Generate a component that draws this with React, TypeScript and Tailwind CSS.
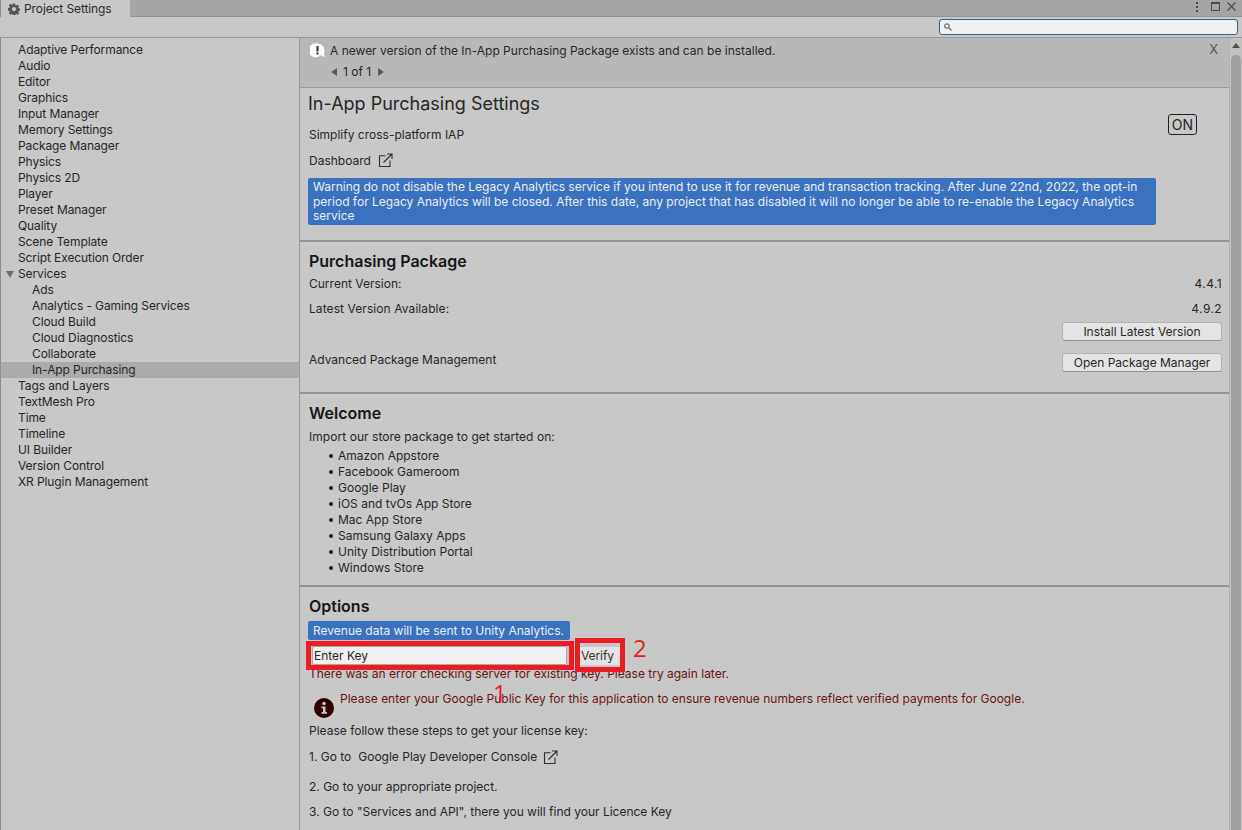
import React from "react";

const general1 = ["Adaptive Performance","Audio","Editor","Graphics","Input Manager","Memory Settings","Package Manager","Physics","Physics 2D","Player","Preset Manager","Quality","Scene Template","Script Execution Order"];
const services = ["Ads","Analytics - Gaming Services","Cloud Build","Cloud Diagnostics","Collaborate"];
const general2 = ["Tags and Layers","TextMesh Pro","Time","Timeline","UI Builder","Version Control","XR Plugin Management"];
const stores = ["Amazon Appstore","Facebook Gameroom","Google Play","iOS and tvOs App Store","Mac App Store","Samsung Galaxy Apps","Unity Distribution Portal","Windows Store"];

function Ext() {
  return (
    <svg width="15" height="15" viewBox="0 0 15 15" fill="none" stroke="#2e2e2e" strokeWidth="1.1" className="shrink-0">
      <path d="M7.5 2.8H1.5V13.5H12V7.5" />
      <path d="M5.5 9.5L13.5 1.5M9 1H14V6" />
    </svg>
  );
}

function Row({ children, indent = 17 }: { children: React.ReactNode; indent?: number }) {
  return <div className="h-4 leading-4 truncate tracking-[-0.1px]" style={{ paddingLeft: indent }}>{children}</div>;
}

export default function App() {
  return (
    <div className="relative w-[1242px] h-[830px] overflow-hidden bg-[#c8c8c8] text-[#262626] text-[12px] flex flex-col font-['Inter','Liberation_Sans',sans-serif]">
      {/* title bar */}
      <div className="h-[17px] shrink-0 bg-[#a5a5a5] flex items-start border-b border-[#949494]">
        <div className="w-[130px] h-[17px] bg-[#c8c8c8] border-l border-[#8e8e8e] flex items-center pl-[7px] gap-[4px] text-[#2b2b2b]">
          <svg width="12" height="12" viewBox="0 0 16 16" fill="#565656">
            <path d="M6.6 0.5h2.8l.4 2.1 1.3.6 1.8-1.2 2 2-1.2 1.8.6 1.3 2.1.4v2.8l-2.1.4-.6 1.3 1.2 1.8-2 2-1.8-1.2-1.3.6-.4 2.1H6.6l-.4-2.1-1.3-.6-1.8 1.2-2-2 1.2-1.8-.6-1.3-2.1-.4V6.6l2.1-.4.6-1.3-1.2-1.8 2-2 1.8 1.2 1.3-.6zM8 5.2a2.8 2.8 0 100 5.6 2.8 2.8 0 000-5.6z" />
          </svg>
          <span className="leading-[17px] tracking-[-0.1px]">Project Settings</span>
        </div>
        <div className="ml-auto flex items-center h-[13px]">
          <div className="flex flex-col gap-[2px] mr-[13px]">
            <span className="w-[2px] h-[2px] bg-[#4c4c4c]" />
            <span className="w-[2px] h-[2px] bg-[#4c4c4c]" />
            <span className="w-[2px] h-[2px] bg-[#4c4c4c]" />
          </div>
          <div className="w-[9px] h-[9px] border border-[#4c4c4c] border-t-2 mr-[7px]" />
          <svg width="9" height="9" viewBox="0 0 9 9" stroke="#4c4c4c" strokeWidth="1.2" className="mr-[6px]">
            <path d="M0.5 0.5L8.5 8.5M8.5 0.5L0.5 8.5" />
          </svg>
        </div>
      </div>
      {/* toolbar */}
      <div className="h-[21px] shrink-0 border-b border-[#999999] bg-[#c8c8c8] flex items-start justify-end pr-[4px] pt-[2px]">
        <div className="w-[299px] h-[16px] rounded-[3px] border border-[#2a5f9e] bg-[#f0f0f0] flex items-center pl-[4px]">
          <svg width="8" height="8" viewBox="0 0 8 8" fill="none" stroke="#6b6b6b" strokeWidth="1.2">
            <circle cx="3" cy="3" r="2.2" />
            <path d="M5 5L7.5 7.5" />
          </svg>
        </div>
      </div>
      {/* body */}
      <div className="flex-1 flex min-h-0">
        {/* sidebar */}
        <div className="w-[300px] shrink-0 border-l border-[#8e8e8e] border-r border-r-[#999999] pt-[4px] text-[#262626]">
          {general1.map((t) => <Row key={t}>{t}</Row>)}
          <div className="relative">
            <Row>Services</Row>
            <span className="absolute left-[5px] top-[5px] w-0 h-0 border-x-[4px] border-t-[7px] border-x-transparent border-t-[#6e6e6e]" />
          </div>
          {services.map((t) => <Row key={t} indent={31}>{t}</Row>)}
          <div className="bg-[#ababab]"><Row indent={31}>In-App Purchasing</Row></div>
          {general2.map((t) => <Row key={t}>{t}</Row>)}
        </div>
        {/* main */}
        <div className="flex-1 min-w-0 flex">
          <div className="flex-1 min-w-0 flex flex-col">
            {/* notice */}
            <div className="relative h-[50px] shrink-0 bg-[#b8b8b8] border-b border-[#999999] pl-[10px] pt-[5px]">
              <div className="flex items-center gap-[5px] h-[16px]">
                <svg width="15" height="16" viewBox="0 0 15 16" className="shrink-0">
                  <path d="M7.5 0.5a7 7 0 016.8 8.6c-.4 1.6-.2 3.2.5 4.7-1.6-.2-3-.7-4.2-1.6A7 7 0 117.5 0.5z" fill="#ffffff" />
                  <rect x="6.5" y="3" width="2" height="5.5" fill="#2b2b2b" />
                  <rect x="6.5" y="9.5" width="2" height="2" fill="#2b2b2b" />
                </svg>
                <span>A newer version of the In-App Purchasing Package exists and can be installed.</span>
              </div>
              <div className="flex items-center h-[16px] mt-[5px] pl-[21px]">
                <span className="w-0 h-0 border-y-[4px] border-r-[6px] border-y-transparent border-r-[#5a5a5a] mr-[6px]" />
                <span>1 of 1</span>
                <span className="w-0 h-0 border-y-[4px] border-l-[6px] border-y-transparent border-l-[#5a5a5a] ml-[7px]" />
              </div>
              <span className="absolute right-[11px] top-[2px] text-[#555555] text-[13px]">X</span>
            </div>
            {/* settings */}
            <div className="relative h-[154px] shrink-0 border-b-2 border-[#939393] px-[9px]">
              <div className="text-[18px] leading-[24px] mt-[4px] -ml-[1px]">In-App Purchasing Settings</div>
              <div className="mt-[11px] leading-4">Simplify cross-platform IAP</div>
              <div className="mt-[9px] flex items-center gap-[7px] h-[17px]"><span>Dashboard</span><Ext /></div>
              <div className="mt-[9px] ml-[-1px] w-[848px] h-[47px] bg-[#3a72c0] rounded-[2px] text-[#e8eef8] px-[5px] pt-[2px] leading-[14.5px]">
                Warning do not disable the Legacy Analytics service if you intend to use it for revenue and transaction tracking. After June 22nd, 2022, the opt-in period for Legacy Analytics will be closed. After this date, any project that has disabled it will no longer be able to re-enable the Legacy Analytics service
              </div>
              <span className="absolute right-[32px] top-[26px] w-[29px] h-[21px] border border-[#222222] rounded-[3px] flex items-center justify-center text-[14px]">ON</span>
            </div>
            {/* package */}
            <div className="h-[152px] shrink-0 border-b-2 border-[#939393] pl-[9px] pr-[7px] flex flex-col">
              <div className="text-[16px] font-semibold text-[#161616] leading-[20px] mt-[9px]">Purchasing Package</div>
              <div className="flex justify-between mt-[5px] leading-[16px]"><span>Current Version:</span><span className="tracking-[0.4px]">4.4.1</span></div>
              <div className="flex justify-between mt-[9px] leading-[16px]"><span className="tracking-[0.08px]">Latest Version Available:</span><span className="tracking-[0.4px]">4.9.2</span></div>
              <div className="flex justify-end mt-[5px]">
                <button className="w-[160px] h-[19px] rounded-[3px] bg-[#e4e4e4] border border-[#b2b2b2] border-b-[#959595] leading-none text-[#262626]">Install Latest Version</button>
              </div>
              <div className="flex justify-between items-center mt-[12px]">
                <span className="-mt-[5px]">Advanced Package Management</span>
                <button className="w-[160px] h-[19px] rounded-[3px] bg-[#e4e4e4] border border-[#b2b2b2] border-b-[#959595] leading-none text-[#262626]">Open Package Manager</button>
              </div>
            </div>
            {/* welcome */}
            <div className="h-[193px] shrink-0 border-b-2 border-[#939393] px-[9px]">
              <div className="text-[16px] font-semibold text-[#161616] leading-[20px] mt-[9px]">Welcome</div>
              <div className="mt-[6px] leading-4 tracking-[0.05px]">Import our store package to get started on:</div>
              <ul className="mt-[3px]">
                {stores.map((s) => (
                  <li key={s} className="h-4 leading-4 flex items-center pl-[20px]">
                    <span className="w-[4px] h-[4px] rounded-full bg-[#222222] mr-[5px]" />
                    {s}
                  </li>
                ))}
              </ul>
            </div>
            {/* options */}
            <div className="relative flex-1 px-[9px]">
              <div className="text-[16px] font-semibold text-[#161616] leading-[20px] mt-[9px]">Options</div>
              <div className="mt-[5px] ml-[-1px] w-[262px] h-[19px] bg-[#3a72c0] rounded-[2px] text-[#e8eef8] px-[5px] leading-[19px]">Revenue data will be sent to Unity Analytics.</div>
              <div className="flex mt-[6px] gap-[13px] ml-[3px]">
                <div className="w-[255px] h-[19px] bg-[#f0f0f0] border border-[#a8a8a8] rounded-[2px] text-[#262626] pl-[1px] leading-[18px]">Enter Key</div>
                <div className="w-[40px] h-[18px] mt-[1px] bg-[#e4e4e4] text-[#333333] pl-[1px] tracking-[-0.1px] leading-[18px]">Verify</div>
              </div>
              <div className="text-[#661414] leading-4 mt-[1px]">There was an error checking server for existing key. Please try again later.</div>
              <div className="flex items-start mt-[9px] ml-[5px] gap-[6px] text-[#661414]">
                <svg width="20" height="20" viewBox="0 0 20 20" className="mt-[7px] shrink-0">
                  <circle cx="10" cy="10" r="10" fill="#2e0000" />
                  <circle cx="10" cy="5.5" r="1.8" fill="#c8c8c8" />
                  <path d="M7.5 8.5H11.5V14H13V15.8H7.5V14H9V10.2H7.5Z" fill="#c8c8c8" />
                </svg>
                <span className="leading-4">Please enter your Google Public Key for this application to ensure revenue numbers reflect verified payments for Google.</span>
              </div>
              <div className="mt-[5px] leading-4">Please follow these steps to get your license key:</div>
              <div className="mt-[10px] flex items-center h-[16px]"><span className="mr-[7px]">1. Go to</span><span className="mr-[6px]">Google Play Developer Console</span><Ext /></div>
              <div className="mt-[14px] leading-4">2. Go to your appropriate project.</div>
              <div className="mt-[9px] leading-4">3. Go to "Services and API", there you will find your Licence Key</div>
              {/* annotations */}
              <div className="absolute left-[6px] top-[54px] w-[268px] h-[29px] border-[5px] border-[#ed1c24]" />
              <div className="absolute left-[275px] top-[51px] w-[50px] h-[34px] border-[5px] border-[#ed1c24]" />
              <span className="absolute left-[333px] top-[47px] text-[#ed1c24] text-[24px] leading-[28px] font-['Open_Sans',sans-serif]">2</span>
              <span className="absolute left-[193px] top-[92px] text-[#ed1c24] text-[24px] leading-[28px] font-['Open_Sans',sans-serif]">1</span>
            </div>
          </div>
          {/* scrollbar */}
          <div className="relative w-[13px] shrink-0 bg-[#c2c2c2] border-l border-[#b0b0b0]">
            <span className="absolute left-[2px] top-[5px] w-0 h-0 border-x-[4px] border-b-[5px] border-x-transparent border-b-[#505050]" />
            <div className="absolute left-[1px] right-[1px] top-[17px] bottom-0 bg-[#9f9f9f] rounded-t-[5px]" />
          </div>
        </div>
      </div>
    </div>
  );
}
